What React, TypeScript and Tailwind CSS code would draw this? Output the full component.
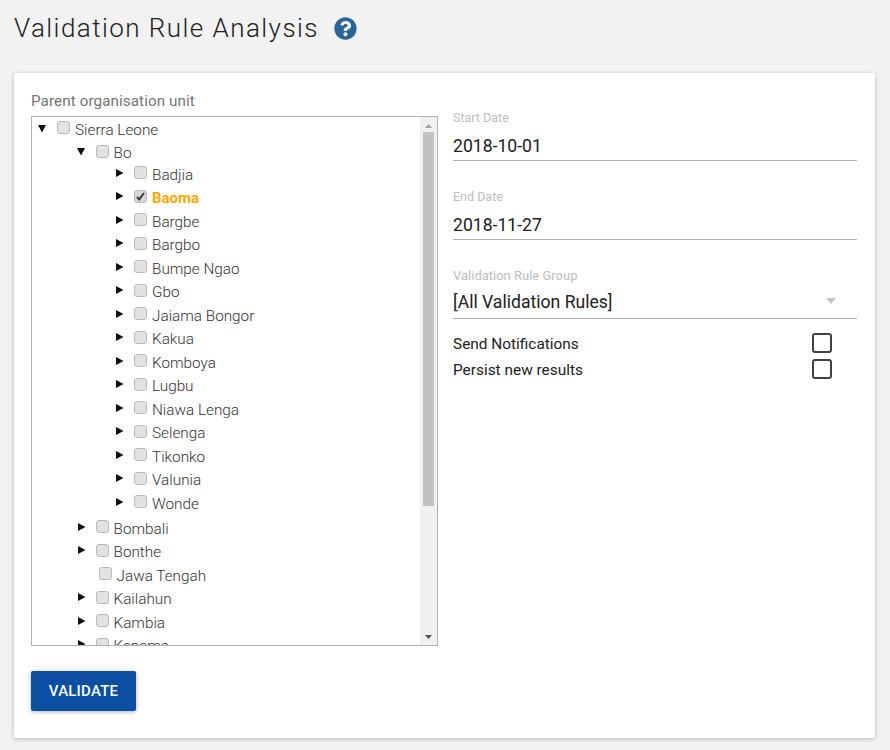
import React from "react";
import { FaQuestionCircle } from "react-icons/fa";

type Node = { label: string; depth: number; open?: boolean; leaf?: boolean; checked?: boolean; shift?: string };

const nodes: Node[] = [
  { label: "Sierra Leone", depth: 0, open: true },
  { label: "Bo", depth: 1, open: true },
  { label: "Badjia", depth: 2, shift: "mt-[-2px]" },
  { label: "Baoma", depth: 2, checked: true },
  ...["Bargbe", "Bargbo", "Bumpe Ngao", "Gbo", "Jaiama Bongor", "Kakua", "Komboya", "Lugbu", "Niawa Lenga", "Selenga", "Tikonko", "Valunia", "Wonde"].map((label) => ({ label, depth: 2 })),
  { label: "Bombali", depth: 1, shift: "mt-[1.5px]" },
  { label: "Bonthe", depth: 1 },
  { label: "Jawa Tengah", depth: 1, leaf: true },
  { label: "Kailahun", depth: 1 },
  { label: "Kambia", depth: 1 },
  { label: "Kenema", depth: 1 },
];

const depthPad = ["pl-[5px]", "pl-[43.5px]", "pl-[82px]"];

function Arrow({ open }: { open?: boolean }) {
  return (
    <svg width="10" height="10" viewBox="0 0 10 10" className="shrink-0 mt-[-5px]">
      {open ? <path d="M1 2h8L5 9.5z" fill="#111" /> : <path d="M2 1L9.5 5 2 9z" fill="#111" />}
    </svg>
  );
}

function Box({ checked }: { checked?: boolean }) {
  return (
    <div className={`w-[13px] h-[13px] shrink-0 rounded-[3px] border border-[#bababa] flex items-center justify-center mt-[-5px] ${checked ? "bg-[#d8d8d8]" : "bg-[#e2e2e2]"}`}>
      {checked && (
        <svg width="11" height="11" viewBox="0 0 11 11" className="shrink-0">
          <path d="M2 6l2.2 2.4L9 2" fill="none" stroke="#3a3a3a" strokeWidth="2" />
        </svg>
      )}
    </div>
  );
}

function TreeRow({ n }: { n: Node }) {
  return (
    <div className={`flex items-center h-[23.5px] shrink-0 ${depthPad[n.depth]} ${n.shift ?? ""}`}>
      {n.leaf ? <div className="w-[13px] shrink-0" /> : <Arrow open={n.open} />}
      <div className="w-[10px] shrink-0" />
      <Box checked={n.checked} />
      <span
        className={`ml-[5px] leading-none ${n.checked ? "font-bold text-[#ffa500] text-[15px]" : "font-light text-[#333333] text-[15.3px]"}`}
      >
        {n.label}
      </span>
    </div>
  );
}

function Field({ label, value, select }: { label: string; value: string; select?: boolean }) {
  return (
    <div className="h-[79px]">
      <div className={`leading-none text-[#bdbdbd] ${select ? "text-[13px]" : "text-[12.5px] pt-[1px]"}`}>{label}</div>
      <div className={`h-[29px] border-b border-[#b0b0b0] flex items-center justify-between text-[17.6px] leading-none text-[#212121] ${select ? "mt-[8px] pb-[2px]" : "mt-[7px] pt-[2px]"}`}>
        <span>{value}</span>
        {select && (
          <svg width="10" height="6" viewBox="0 0 10 6" className="mr-[21px] mt-[-4px]">
            <path d="M0 0h10L5 6z" fill="#c4c4c4" />
          </svg>
        )}
      </div>
    </div>
  );
}

function CheckRow({ label }: { label: string }) {
  return (
    <div className="h-[26px] flex items-center justify-between pr-[25px]">
      <span className="text-[15.4px] leading-none text-[#212121] mt-[1px]">{label}</span>
      <div className="w-[20px] h-[20px] border-2 border-[#424242] rounded-[3px] mt-[-2px]" />
    </div>
  );
}

export default function App() {
  return (
    <div className="w-[890px] h-[750px] bg-[#f2f2f2] overflow-hidden font-['Roboto',sans-serif] px-[14px]">
      <div className="h-[73px] flex items-start pt-[12px]">
        <h1 className="text-[26px] leading-[32px] font-light tracking-[1.45px] text-[#212121]">Validation Rule Analysis</h1>
        <FaQuestionCircle className="ml-[15px] mt-[5px] text-[#296596]" size={23} />
      </div>
      <div className="w-[861px] h-[665px] bg-white rounded-[2px] shadow-[0_1px_4px_rgba(0,0,0,0.25)] pl-[17px] pt-[19px]">
        <div className="flex">
          <div className="w-[407px]">
            <div className="text-[15.2px] leading-[18px] text-[#757575] tracking-[0.1px] mb-[6px]">Parent organisation unit</div>
            <div className="h-[530px] border border-[#b3b3b3] flex overflow-hidden">
              <div className="flex-1 flex flex-col overflow-hidden pt-[1.5px]">
                {nodes.map((n) => (
                  <TreeRow key={n.label} n={n} />
                ))}
              </div>
              <div className="w-[17px] h-full bg-[#f0f0f0] flex flex-col items-center relative">
                <svg width="7" height="4" viewBox="0 0 7 4" className="mt-[7px]">
                  <path d="M0 4h7L3.5 0z" fill="#a3a3a3" />
                </svg>
                <div className="w-[11px] h-[374px] bg-[#c1c1c1] mt-[4px]" />
                <svg width="7" height="4" viewBox="0 0 7 4" className="absolute bottom-[6px]">
                  <path d="M0 0h7L3.5 4z" fill="#505050" />
                </svg>
              </div>
            </div>
          </div>
          <div className="w-[404px] ml-[15px] pt-[19px]">
            <Field label="Start Date" value="2018-10-01" />
            <Field label="End Date" value="2018-11-27" />
            <Field label="Validation Rule Group" value="[All Validation Rules]" select />
            <div className="mt-[-17px]">
              <CheckRow label="Send Notifications" />
              <CheckRow label="Persist new results" />
            </div>
          </div>
        </div>
        <button className="mt-[25px] w-[105px] h-[40px] bg-[#0b4ea2] rounded-[2px] text-white text-[15px] tracking-[0.2px] font-medium shadow-[0_1px_4px_rgba(0,0,0,0.3)]">
          VALIDATE
        </button>
      </div>
    </div>
  );
}
